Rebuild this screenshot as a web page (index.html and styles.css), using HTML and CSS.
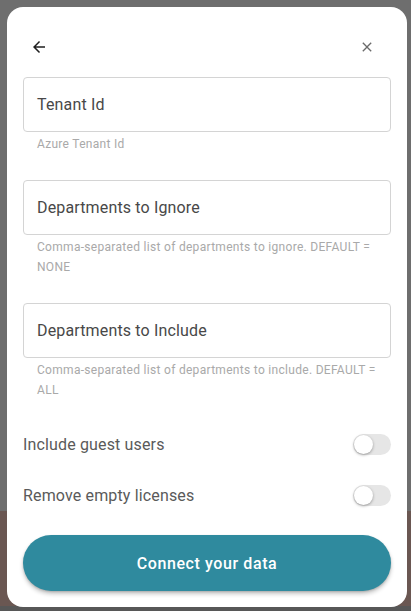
FILE: index.html
```html
<!DOCTYPE html>
<html lang="en">
<head>
<meta charset="utf-8">
<title>Connect your data</title>
<link rel="stylesheet" href="styles.css">
</head>
<body>
<div class="backdrop">
  <div class="modal">
    <div class="modal-header">
      <button class="icon-btn back" aria-label="Back">
        <svg viewBox="0 0 24 24" width="18" height="18"><path d="M20 11H7.83l5.59-5.59L12 4l-8 8 8 8 1.41-1.41L7.83 13H20v-2z" fill="currentColor"/></svg>
      </button>
      <button class="icon-btn close" aria-label="Close">
        <svg viewBox="0 0 24 24" width="16" height="16"><path d="M19 6.41L17.59 5 12 10.59 6.41 5 5 6.41 10.59 12 5 17.59 6.41 19 12 13.41 17.59 19 19 17.59 13.41 12z" fill="currentColor"/></svg>
      </button>
    </div>

    <div class="fields">
      <div class="field">
        <div class="input">Tenant Id</div>
        <div class="helper">Azure Tenant Id</div>
      </div>
      <div class="field">
        <div class="input">Departments to Ignore</div>
        <div class="helper">Comma-separated list of departments to ignore. DEFAULT = NONE</div>
      </div>
      <div class="field">
        <div class="input">Departments to Include</div>
        <div class="helper">Comma-separated list of departments to include. DEFAULT = ALL</div>
      </div>
    </div>

    <div class="toggles">
      <div class="toggle-row">
        <span class="toggle-label">Include guest users</span>
        <span class="switch"><span class="knob"></span></span>
      </div>
      <div class="toggle-row">
        <span class="toggle-label">Remove empty licenses</span>
        <span class="switch"><span class="knob"></span></span>
      </div>
    </div>

    <button class="primary">Connect your data</button>
  </div>
</div>
</body>
</html>
```

FILE: styles.css
```css
* { box-sizing: border-box; }

html, body {
  margin: 0;
  padding: 0;
  width: 411px;
  height: 611px;
  overflow: hidden;
}

body {
  font-family: Roboto, "Liberation Sans", sans-serif;
  background: linear-gradient(to bottom, #6e6e6e 0, #6e6e6e 511px, #6a5752 511px, #6a5752 606px, #575757 606px);
}

.backdrop {
  padding: 7px 4px 4px 7px;
}

.modal {
  width: 400px;
  height: 600px;
  background: #ffffff;
  border-radius: 16px;
  padding: 16px 16px 16px 16px;
  display: flex;
  flex-direction: column;
}

.modal-header {
  height: 48px;
  display: flex;
  align-items: center;
  justify-content: space-between;
  padding-right: 8px;
}

.icon-btn {
  width: 32px;
  height: 32px;
  border: 0;
  background: transparent;
  padding: 0;
  display: flex;
  align-items: center;
  justify-content: center;
  cursor: pointer;
}

.icon-btn.back { color: #1f1f1f; }
.icon-btn.close { color: #6b6b6b; }

.fields {
  margin-top: 6px;
  display: flex;
  flex-direction: column;
  gap: 26px;
}

.input {
  height: 55px;
  border: 1px solid #d4d4d4;
  border-radius: 4px;
  padding: 0 13px;
  display: flex;
  align-items: center;
  font-size: 16px;
  color: #484848;
  letter-spacing: 0.15px;
}

.helper {
  margin: 2px 10px 0 14px;
  font-size: 12px;
  line-height: 20px;
  color: #a9a9a9;
  letter-spacing: 0.3px;
}

.toggles {
  margin-top: 24px;
  display: flex;
  flex-direction: column;
  gap: 11px;
}

.toggle-row {
  height: 40px;
  display: flex;
  align-items: center;
  justify-content: space-between;
}

.toggle-label {
  font-size: 16px;
  color: #5a5a5a;
  letter-spacing: 0.15px;
}

.switch {
  position: relative;
  width: 38px;
  height: 21px;
  border-radius: 11px;
  background: #e6e6e6;
  display: block;
}

.knob {
  position: absolute;
  left: 1px;
  top: 1px;
  width: 19px;
  height: 19px;
  border-radius: 50%;
  background: #ffffff;
  box-shadow: 0 1px 3px rgba(0, 0, 0, 0.35);
}

.primary {
  margin-top: 20px;
  height: 56px;
  width: 100%;
  border: 0;
  border-radius: 28px;
  background: #2f8a9e;
  color: #ffffff;
  font-family: Roboto, "Liberation Sans", sans-serif;
  font-size: 16px;
  font-weight: 500;
  letter-spacing: 0.6px;
  box-shadow: 0 3px 4px rgba(0, 0, 0, 0.22), 0 1px 2px rgba(0, 0, 0, 0.15);
  cursor: pointer;
}
```
